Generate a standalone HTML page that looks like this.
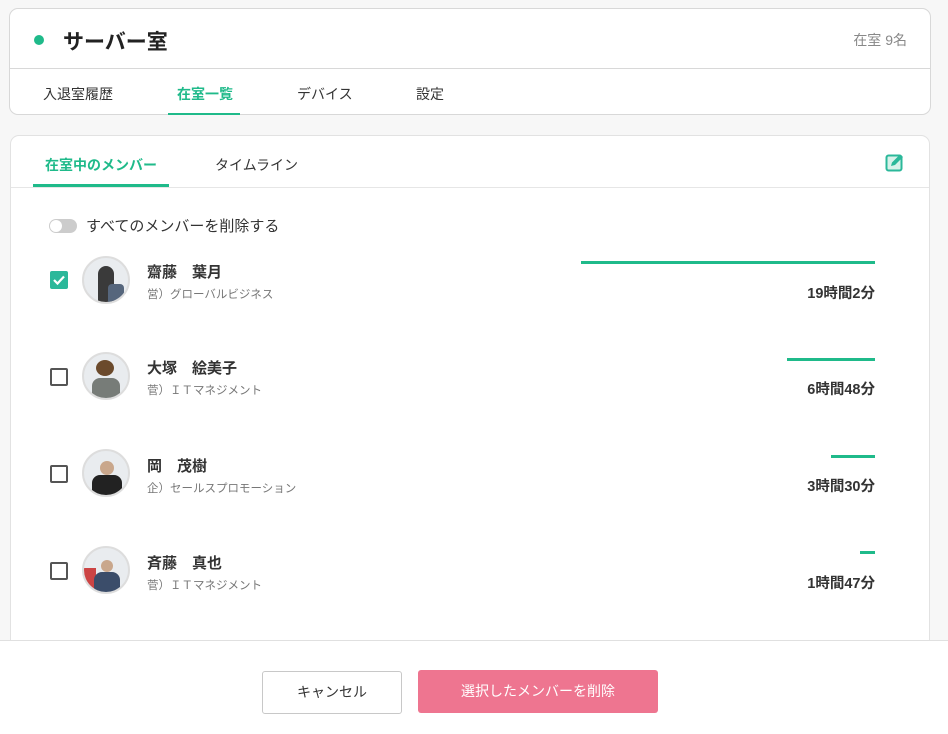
<!DOCTYPE html>
<html style="width:948px;height:734px;overflow:hidden"><head><meta charset="utf-8"><style>
*{box-sizing:border-box;margin:0;padding:0}
body{width:948px;height:734px;background:#f7f7f7;font-family:"Liberation Sans","Noto Sans CJK JP",sans-serif;color:#333;position:relative;overflow:hidden}
.a{position:absolute}
.card1{left:9px;top:8px;width:922px;height:107px;background:#fff;border:1px solid #d8d8d8;border-radius:9px}
.card2{left:10px;top:135px;width:920px;height:560px;background:#fff;border:1px solid #e2e2e2;border-radius:9px}
.t{position:absolute;white-space:nowrap}
.cb{position:absolute;left:50px;width:18px;height:18px;border:2px solid #555;border-radius:2px;background:#fff}
.av{position:absolute;left:82px;width:48px;height:48px;border-radius:50%;border:2px solid #ddd;background:#e9ecef;overflow:hidden}
.name{position:absolute;left:147px;font-size:15px;font-weight:bold;color:#333}
.sub{position:absolute;left:147px;font-size:11.5px;color:#777}
.bar{position:absolute;height:3px;background:#1fba8a}
.tm{position:absolute;right:73px;font-size:14.5px;font-weight:bold;color:#333}
</style></head><body>
<div class="a card1"></div>
<div class="a" style="left:34px;top:35px;width:10px;height:10px;border-radius:50%;background:#1fba8a"></div>
<div class="t" style="left:63px;top:26px;font-size:21px;font-weight:bold;color:#222">サーバー室</div>
<div class="t" style="right:41px;top:30px;font-size:14px;color:#888">在室 9名</div>
<div class="a" style="left:10px;top:68px;width:920px;height:1px;background:#d8d8d8"></div>
<div class="t" style="left:43px;top:84px;font-size:14px;color:#333">入退室履歴</div>
<div class="t" style="left:177px;top:84px;font-size:14px;color:#1fba8a;font-weight:bold">在室一覧</div>
<div class="a" style="left:168px;top:113px;width:72px;height:2px;background:#1fba8a"></div>
<div class="t" style="left:297px;top:84px;font-size:14px;color:#333">デバイス</div>
<div class="t" style="left:416px;top:84px;font-size:14px;color:#333">設定</div>

<div class="a card2"></div>
<div class="t" style="left:45px;top:155px;font-size:14px;color:#1fba8a;font-weight:bold">在室中のメンバー</div>
<div class="a" style="left:33px;top:184px;width:136px;height:3px;background:#1fba8a"></div>
<div class="t" style="left:215px;top:155px;font-size:14px;color:#333">タイムライン</div>
<div class="a" style="left:11px;top:187px;width:918px;height:1px;background:#e6e6e6"></div>
<svg class="a" style="left:885px;top:152px" width="20" height="20" viewBox="0 0 20 20"><rect x="1.5" y="3.5" width="15" height="15" rx="2" fill="#d8f2ea" stroke="#2bb89a" stroke-width="2"/><path d="M6 14 L7 10.5 L15 2.5 L18 5 L10 13 Z" fill="#2bb89a"/></svg>

<div class="a" style="left:49px;top:219px;width:28px;height:14px;border-radius:7px;background:#ccc"></div>
<div class="a" style="left:50px;top:220px;width:12px;height:12px;border-radius:50%;background:#fff"></div>
<div class="t" style="left:86px;top:215px;font-size:15px;color:#333">すべてのメンバーを削除する</div>

<div class="cb" style="top:271px;background:#2bb89a;border-color:#2bb89a"></div>
<svg class="a" style="left:52px;top:273px" width="14" height="14" viewBox="0 0 14 14"><path d="M2 7 L5.5 10.5 L12 3.5" fill="none" stroke="#fff" stroke-width="2.2"/></svg>
<div class="av" style="top:256px"><div class="a" style="left:14px;top:8px;width:16px;height:36px;background:#3a3a3a;border-radius:8px 8px 2px 2px"></div><div class="a" style="left:24px;top:26px;width:16px;height:22px;background:#56667c;border-radius:4px"></div></div>
<div class="name" style="top:261px">齋藤　葉月</div>
<div class="sub" style="top:286px">営）グローバルビジネス</div>
<div class="bar" style="left:581px;width:294px;top:261px"></div>
<div class="tm" style="top:282px">19時間2分</div>

<div class="cb" style="top:368px"></div>
<div class="av" style="top:352px"><div class="a" style="left:12px;top:6px;width:18px;height:16px;background:#6b4a2c;border-radius:50%"></div><div class="a" style="left:8px;top:24px;width:28px;height:24px;background:#777c78;border-radius:8px 8px 0 0"></div></div>
<div class="name" style="top:357px">大塚　絵美子</div>
<div class="sub" style="top:382px">菅）ＩＴマネジメント</div>
<div class="bar" style="left:787px;width:88px;top:358px"></div>
<div class="tm" style="top:378px">6時間48分</div>

<div class="cb" style="top:465px"></div>
<div class="av" style="top:449px"><div class="a" style="left:16px;top:10px;width:14px;height:14px;background:#c9a78c;border-radius:50%"></div><div class="a" style="left:8px;top:24px;width:30px;height:24px;background:#222;border-radius:8px 8px 0 0"></div></div>
<div class="name" style="top:455px">岡　茂樹</div>
<div class="sub" style="top:480px">企）セールスプロモーション</div>
<div class="bar" style="left:831px;width:44px;top:455px"></div>
<div class="tm" style="top:475px">3時間30分</div>

<div class="cb" style="top:562px"></div>
<div class="av" style="top:546px"><div class="a" style="left:0;top:20px;width:12px;height:26px;background:#c44;"></div><div class="a" style="left:17px;top:12px;width:12px;height:12px;background:#c9a78c;border-radius:50%"></div><div class="a" style="left:10px;top:24px;width:26px;height:24px;background:#3b4d6a;border-radius:8px 8px 0 0"></div></div>
<div class="name" style="top:552px">斉藤　真也</div>
<div class="sub" style="top:577px">菅）ＩＴマネジメント</div>
<div class="bar" style="left:860px;width:15px;top:551px"></div>
<div class="tm" style="top:572px">1時間47分</div>

<div class="a" style="left:0;top:640px;width:948px;height:94px;background:#fff;border-top:1px solid #e0e0e0"></div>
<div class="a" style="left:262px;top:671px;width:140px;height:43px;border:1px solid #c8c8c8;border-radius:3px;background:#fff;font-size:14px;color:#333;text-align:center;line-height:41px">キャンセル</div>
<div class="a" style="left:418px;top:670px;width:240px;height:43px;border-radius:3px;background:#ee7590;font-size:14px;color:#fff;text-align:center;line-height:43px">選択したメンバーを削除</div>
</body></html>
